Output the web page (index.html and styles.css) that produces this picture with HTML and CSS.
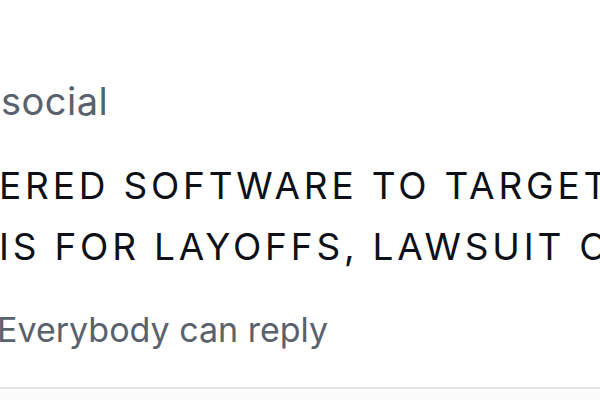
FILE: index.html
```html
<html>

<head>
  <meta name="viewport" content="width=device-width, initial-scale=1.0">
  <link rel="stylesheet" href="styles.css">
</head>

<body>
  <div class="post">
    <div class="handle">social</div>
    <div class="text">
      <div class="line">ERED SOFTWARE TO TARGET WORKERS</div>
      <div class="line">IS FOR LAYOFFS, LAWSUIT CLAIMS</div>
    </div>
    <div class="reply">Everybody can reply</div>
  </div>
  <div class="divider"></div>
  <div class="below"></div>
</body>

</html>
```

FILE: styles.css
```css
body {
  font-family: Inter, "Noto Sans", sans-serif;
  margin: 0;
  background-color: #ffffff;
  overflow: hidden;
}

.post {
  padding-top: 78px;
  white-space: nowrap;
  overflow: hidden;
}

.handle {
  font-size: 38px;
  line-height: 46px;
  letter-spacing: 0.5px;
  color: #58616c;
  margin-left: 1px;
}

.text {
  margin-top: 31px;
  font-size: 37px;
  line-height: 61px;
  letter-spacing: 3.8px;
  color: #0d1117;
}

.line {
  margin-left: -1px;
}

.reply {
  margin-top: 32px;
  font-size: 34px;
  line-height: 42px;
  color: #58616c;
  margin-left: -3px;
}

.divider {
  margin-top: 36px;
  height: 2px;
  background-color: #e4e4e4;
}

.below {
  height: 11px;
  background-color: #fbfbfb;
}
```
